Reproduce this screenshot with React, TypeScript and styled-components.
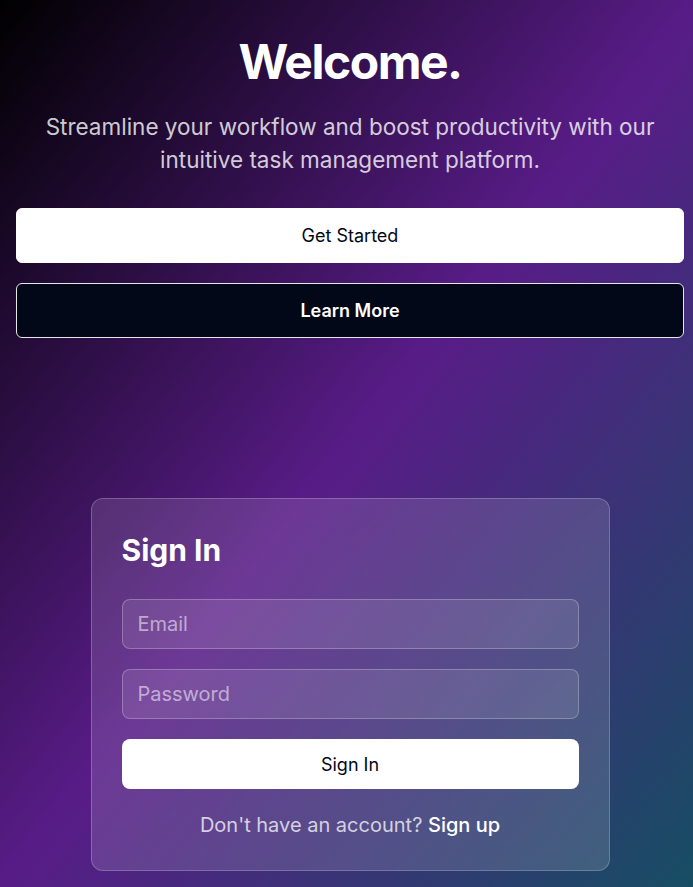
import React from "react";
import styled, { createGlobalStyle } from "styled-components";

const Global = createGlobalStyle`
  html, body { margin: 0; padding: 0; overflow-x: hidden; }
  body { font-family: Inter, "Noto Sans", sans-serif; }
  * { box-sizing: border-box; }
`;

const Page = styled.div`
  width: 700px;
  min-height: 100vh;
  background: linear-gradient(to bottom right, #000000 0%, #581c87 50%, #164e63 100%);
  padding: 34px 16px 18px;
  display: flex;
  flex-direction: column;
  align-items: center;
  color: #fff;
`;

const Hero = styled.section`
  width: 100%;
  display: flex;
  flex-direction: column;
  align-items: center;
  text-align: center;
`;

const Title = styled.h1`
  margin: 0;
  font-size: 48px;
  line-height: 56px;
  font-weight: 700;
  letter-spacing: -1.5px;
`;

const Subtitle = styled.p`
  margin: 20px 0 0;
  font-size: 22.5px;
  line-height: 33px;
  color: rgba(255, 255, 255, 0.8);
  max-width: 640px;
`;

const Actions = styled.div`
  width: 100%;
  display: flex;
  flex-direction: column;
  gap: 20px;
  margin-top: 32px;
`;

const HeroButton = styled.button<{ $variant: "light" | "dark" }>`
  width: 100%;
  height: 55px;
  border-radius: 6px;
  font-family: Inter, sans-serif;
  font-size: 18px;
  cursor: pointer;
  border: 1px solid ${(p) => (p.$variant === "light" ? "#ffffff" : "#e5e7eb")};
  background: ${(p) => (p.$variant === "light" ? "#ffffff" : "#020817")};
  color: ${(p) => (p.$variant === "light" ? "#020817" : "#ffffff")};
  font-weight: ${(p) => (p.$variant === "light" ? 400 : 600)};
`;

const Card = styled.div`
  margin-top: 160px;
  width: 519px;
  border-radius: 12px;
  border: 1px solid rgba(255, 255, 255, 0.22);
  background: linear-gradient(to bottom right, rgba(255, 255, 255, 0.12), rgba(255, 255, 255, 0.14));
  padding: 33px 30px 31px;
  display: flex;
  flex-direction: column;
`;

const CardTitle = styled.h2`
  margin: 0;
  font-size: 30px;
  line-height: 36px;
  font-weight: 700;
`;

const Form = styled.form`
  margin-top: 31px;
  display: flex;
  flex-direction: column;
  gap: 20px;
`;

const Input = styled.input`
  height: 50px;
  width: 100%;
  border-radius: 8px;
  border: 1px solid rgba(255, 255, 255, 0.25);
  background: rgba(255, 255, 255, 0.1);
  padding: 0 15px;
  font-family: Inter, sans-serif;
  font-size: 20px;
  color: #fff;
  outline: none;
  &::placeholder { color: rgba(255, 255, 255, 0.55); }
`;

const SubmitButton = styled.button`
  height: 50px;
  width: 100%;
  border-radius: 8px;
  border: none;
  background: #fff;
  color: #020817;
  font-family: Inter, sans-serif;
  font-size: 18px;
  font-weight: 400;
  cursor: pointer;
`;

const Footer = styled.p`
  margin: 22px 0 0;
  text-align: center;
  font-size: 20px;
  line-height: 28px;
  color: rgba(255, 255, 255, 0.75);
`;

const FooterLink = styled.a`
  color: #fff;
  font-weight: 500;
  text-decoration: none;
`;

export default function App() {
  return (
    <>
      <Global />
      <Page>
        <Hero>
          <Title>Welcome.</Title>
          <Subtitle>
            Streamline your workflow and boost productivity with our intuitive task management platform.
          </Subtitle>
          <Actions>
            <HeroButton $variant="light">Get Started</HeroButton>
            <HeroButton $variant="dark">Learn More</HeroButton>
          </Actions>
        </Hero>
        <Card>
          <CardTitle>Sign In</CardTitle>
          <Form onSubmit={(e) => e.preventDefault()}>
            <Input type="email" placeholder="Email" />
            <Input type="password" placeholder="Password" />
            <SubmitButton type="submit">Sign In</SubmitButton>
          </Form>
          <Footer>
            Don't have an account? <FooterLink href="#">Sign up</FooterLink>
          </Footer>
        </Card>
      </Page>
    </>
  );
}
